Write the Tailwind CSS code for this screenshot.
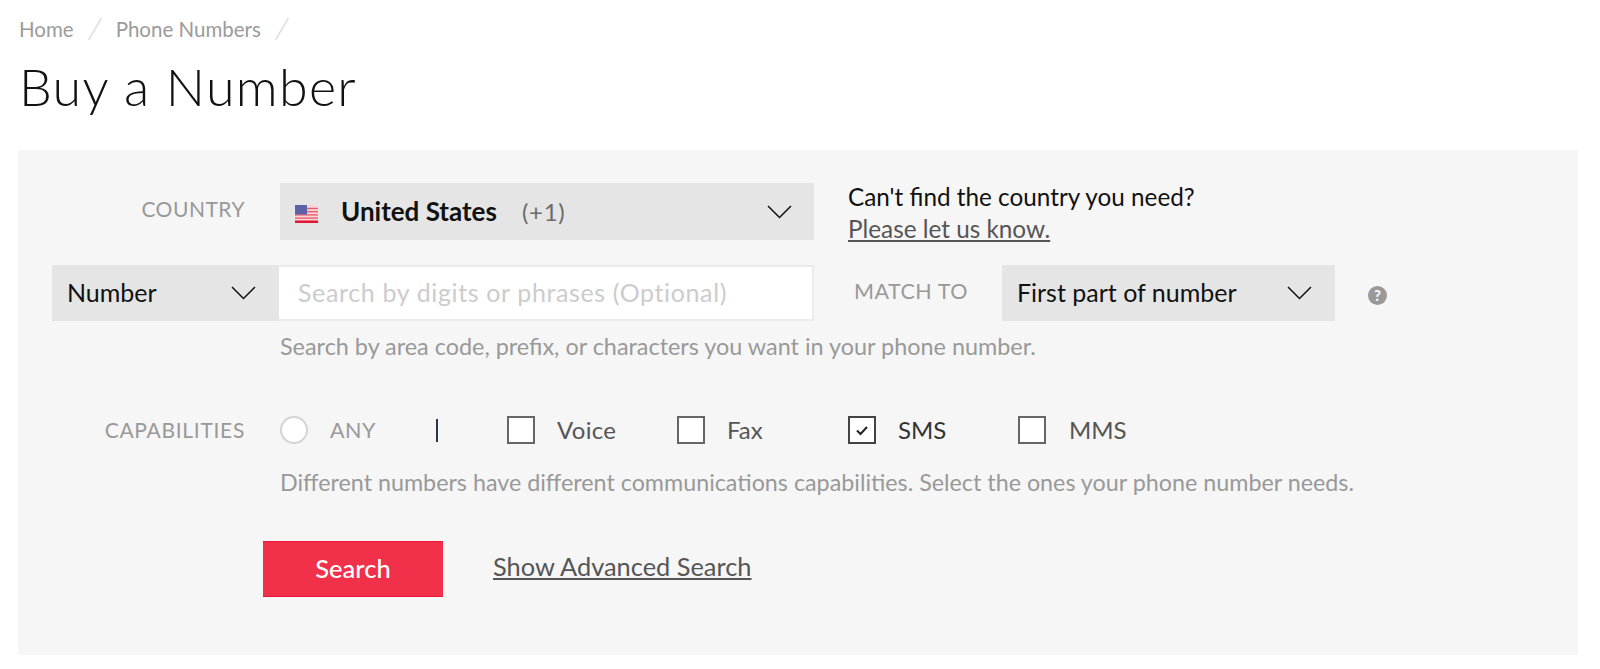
<!DOCTYPE html>
<html lang="en">
<head>
<meta charset="UTF-8">
<title>Buy a Number</title>
<script src="https://cdn.jsdelivr.net/npm/@tailwindcss/browser@4"></script>
</head>
<body class="bg-white font-['Lato',sans-serif] h-[669px] overflow-hidden">
  <nav class="flex items-center h-[24px] mt-[17px] ml-[19px] text-[20.500px] text-[#9b9b9b]">
    <a>Home</a>
    <svg class="ml-[13px] mr-[13px]" width="16" height="24" viewBox="0 0 16 24"><path d="M1.500 23 L14.500 1" stroke="#e0e0e0" stroke-width="1.500" fill="none"/></svg>
    <a>Phone Numbers</a>
    <svg class="ml-[13px]" width="16" height="24" viewBox="0 0 16 24"><path d="M1.500 23 L14.500 1" stroke="#e0e0e0" stroke-width="1.500" fill="none"/></svg>
  </nav>
  <h1 class="ml-[19px] mt-[16px] h-[58px] leading-[58px] text-[52px] font-light tracking-[1.300px] text-[#111]">Buy a Number</h1>

  <section class="ml-[18px] mt-[35px] w-[1560px] h-[505px] bg-[#f6f6f6] pt-[33px]">
    <!-- country -->
    <div class="flex h-[57px]">
      <div class="w-[227px] text-right text-[21px] leading-[52px] text-[#999] tracking-[0.5px]">COUNTRY</div>
      <div class="ml-[35px] w-[534px] bg-[#e5e5e5] flex items-center pl-[15px] pr-[22px]">
        <svg width="23" height="18" viewBox="0 0 23 18" class="mt-[5px] shrink-0">
          <rect width="23" height="18" fill="#f7d5d8"/>
          <rect y="2.800" width="23" height="1.400" fill="#e8606c"/>
          <rect y="6" width="23" height="1.400" fill="#e8606c"/>
          <rect y="9.200" width="23" height="1.400" fill="#e8606c"/>
          <rect y="12.400" width="23" height="1.400" fill="#e8606c"/>
          <rect y="15.500" width="23" height="2.500" fill="#e0172f"/>
          <rect width="12" height="9.500" fill="#5b62a8"/>
        </svg>
        <span class="ml-[23px] text-[26px] font-bold text-[#111]">United States</span>
        <span class="ml-[25px] text-[24px] tracking-[0.7px] text-[#6b6b6b]">(+1)</span>
        <svg class="ml-auto" width="25" height="14" viewBox="0 0 25 14"><path d="M1 1 L12.500 12.500 L24 1" stroke="#111" stroke-width="1.500" fill="none"/></svg>
      </div>
      <div class="ml-[34px] text-[24.300px] leading-[32px] -mt-[2px] text-[#111]">
        <p>Can't find the country you need?</p>
        <a class="underline underline-offset-2 text-[#555]">Please let us know.</a>
      </div>
    </div>

    <!-- number search -->
    <div class="flex h-[56px] mt-[25px] ml-[34px]">
      <div class="w-[227px] bg-[#e5e5e5] flex items-center pl-[15px] pr-[23px] text-[25px] text-[#111]">
        Number
        <svg class="ml-auto" width="25" height="14" viewBox="0 0 25 14"><path d="M1 1 L12.500 12.500 L24 1" stroke="#111" stroke-width="1.500" fill="none"/></svg>
      </div>
      <div class="w-[535px] bg-white border-2 border-[#ebebeb] border-l-0 flex items-center pl-[19px] text-[25px] tracking-[0.63px] text-[#cccccc]">Search by digits or phrases (Optional)</div>
      <div class="ml-[40px] w-[114px] text-[21.500px] leading-[52px] text-[#999] tracking-[0.5px] whitespace-nowrap">MATCH TO</div>
      <div class="ml-[34px] w-[333px] bg-[#e5e5e5] flex items-center pl-[15px] pr-[23px] text-[25px] text-[#111]">
        First part of number
        <svg class="ml-auto" width="25" height="14" viewBox="0 0 25 14"><path d="M1 1 L12.500 12.500 L24 1" stroke="#111" stroke-width="1.500" fill="none"/></svg>
      </div>
      <svg class="ml-[33px] mt-[21px]" width="19" height="19" viewBox="0 0 19 19">
        <circle cx="9.500" cy="9.500" r="9.500" fill="#999"/>
        <text x="9.500" y="15" text-anchor="middle" font-size="15" font-weight="900" font-family="Lato" fill="#f6f6f6">?</text>
      </svg>
    </div>
    <p class="ml-[262px] mt-[11px] h-[28px] leading-[28px] text-[23.400px] text-[#999]">Search by area code, prefix, or characters you want in your phone number.</p>

    <!-- capabilities -->
    <div class="flex items-center h-[28px] mt-[56px]">
      <div class="w-[227px] text-right text-[21px] text-[#999] tracking-[0.7px] -mt-[1px]">CAPABILITIES</div>
      <span class="ml-[35px] w-[28px] h-[28px] rounded-full bg-white border-2 border-[#d4d4d4]"></span>
      <span class="ml-[22px] w-[106px] text-[21.500px] text-[#999] tracking-[0.5px]">ANY</span>
      <span class="w-[2px] h-[23px] bg-[#2a3550]"></span>
      <span class="ml-[69px] w-[28px] h-[28px] bg-white border-2 border-[#666]"></span>
      <span class="ml-[22px] w-[120px] text-[24px] tracking-[0.3px] text-[#555]">Voice</span>
      <span class="w-[28px] h-[28px] bg-white border-2 border-[#666]"></span>
      <span class="ml-[22px] w-[121px] text-[24px] text-[#555]">Fax</span>
      <span class="w-[28px] h-[28px] bg-white border-2 border-[#444] flex items-center justify-center">
        <svg width="14" height="11" viewBox="0 0 14 11"><path d="M2 5.500 L5.500 9 L12 2" stroke="#222" stroke-width="2" fill="none"/></svg>
      </span>
      <span class="ml-[22px] w-[120px] text-[24px] text-[#333]">SMS</span>
      <span class="w-[28px] h-[28px] bg-white border-2 border-[#666]"></span>
      <span class="ml-[23px] text-[24px] text-[#555]">MMS</span>
    </div>
    <p class="ml-[262px] mt-[24px] h-[28px] leading-[28px] text-[23.300px] text-[#999]">Different numbers have different communications capabilities. Select the ones your phone number needs.</p>

    <!-- actions -->
    <div class="flex items-center h-[56px] mt-[45px] ml-[245px]">
      <button class="w-[180px] h-[56px] bg-[#f03149] border-y border-[#f0143a] text-white text-[25.500px] font-medium pb-[1px]">Search</button>
      <a class="ml-[50px] text-[25.400px] text-[#555] underline underline-offset-2 -mt-[5px]">Show Advanced Search</a>
    </div>
  </section>
</body>
</html>
